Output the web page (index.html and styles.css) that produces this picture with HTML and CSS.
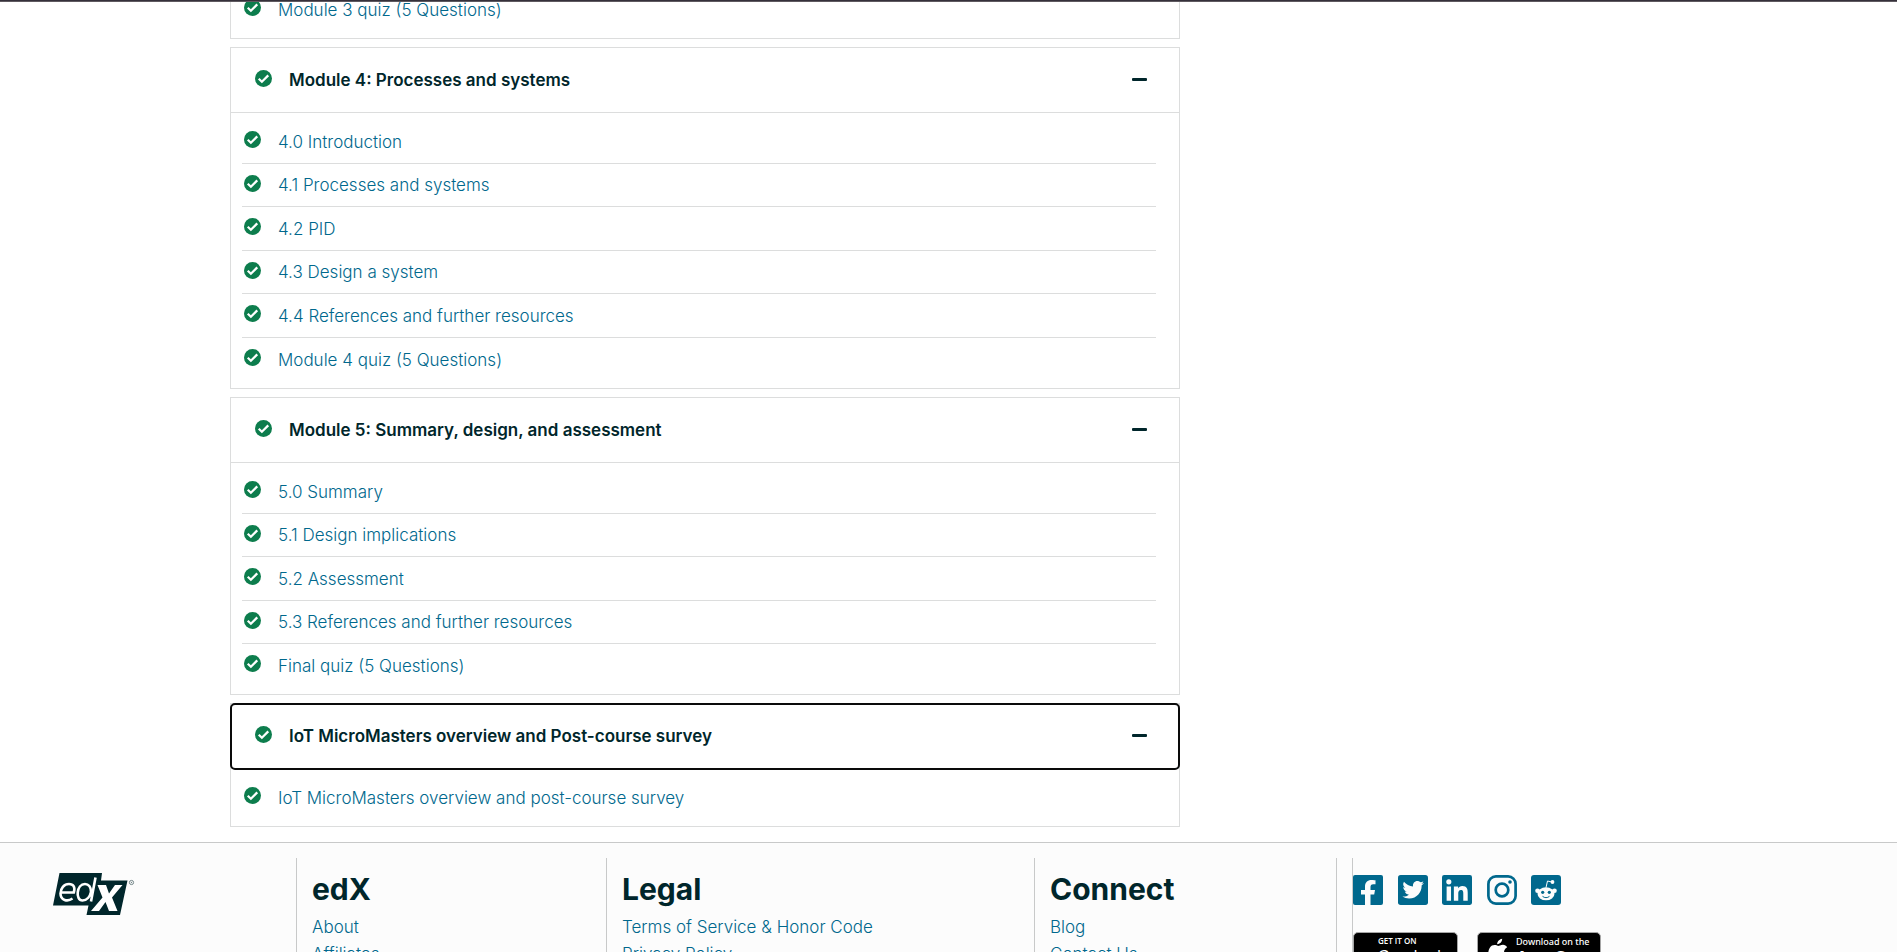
FILE: index.html
```html
<!DOCTYPE html>
<html lang="en">
<head>
<meta charset="utf-8">
<meta name="viewport" content="width=device-width, initial-scale=1">
<title>Course outline | edX</title>
<link rel="stylesheet" href="styles.css">
</head>
<body>
<svg class="sprite" aria-hidden="true">
  <symbol id="check" viewBox="0 0 20 20"><path fill="currentColor" d="M10 0a10 10 0 1 0 0 20 10 10 0 0 0 0-20z"/><path fill="none" stroke="#fff" stroke-width="2.6" d="M4.400 10.200l3.700 3.600 7.500-7.500"/></symbol>
</svg>
<div class="page">
  <div class="topbar"></div>
  <main class="course">
    <div class="outline">
      <section class="card card-continued">
        <ul class="units">
          <li><svg class="check" aria-hidden="true"><use href="#check"/></svg><a href="#m3q">Module 3 quiz (5 Questions)</a></li>
        </ul>
      </section>
      <section class="card">
        <button class="card-head" type="button" aria-expanded="true"><svg class="check" aria-hidden="true"><use href="#check"/></svg><span class="card-title">Module 4: Processes and systems</span><span class="minus"></span></button>
        <ul class="units">
          <li><svg class="check" aria-hidden="true"><use href="#check"/></svg><a href="#u40">4.0 Introduction</a></li>
          <li><svg class="check" aria-hidden="true"><use href="#check"/></svg><a href="#u41">4.1 Processes and systems</a></li>
          <li><svg class="check" aria-hidden="true"><use href="#check"/></svg><a href="#u42">4.2 PID</a></li>
          <li><svg class="check" aria-hidden="true"><use href="#check"/></svg><a href="#u43">4.3 Design a system</a></li>
          <li><svg class="check" aria-hidden="true"><use href="#check"/></svg><a href="#u44">4.4 References and further resources</a></li>
          <li><svg class="check" aria-hidden="true"><use href="#check"/></svg><a href="#m4q">Module 4 quiz (5 Questions)</a></li>
        </ul>
      </section>
      <section class="card">
        <button class="card-head" type="button" aria-expanded="true"><svg class="check" aria-hidden="true"><use href="#check"/></svg><span class="card-title">Module 5: Summary, design, and assessment</span><span class="minus"></span></button>
        <ul class="units">
          <li><svg class="check" aria-hidden="true"><use href="#check"/></svg><a href="#u50">5.0 Summary</a></li>
          <li><svg class="check" aria-hidden="true"><use href="#check"/></svg><a href="#u51">5.1 Design implications</a></li>
          <li><svg class="check" aria-hidden="true"><use href="#check"/></svg><a href="#u52">5.2 Assessment</a></li>
          <li><svg class="check" aria-hidden="true"><use href="#check"/></svg><a href="#u53">5.3 References and further resources</a></li>
          <li><svg class="check" aria-hidden="true"><use href="#check"/></svg><a href="#fq">Final quiz (5 Questions)</a></li>
        </ul>
      </section>
      <section class="card">
        <button class="card-head is-focused" type="button" aria-expanded="true"><svg class="check" aria-hidden="true"><use href="#check"/></svg><span class="card-title">IoT MicroMasters overview and Post-course survey</span><span class="minus"></span></button>
        <ul class="units">
          <li><svg class="check" aria-hidden="true"><use href="#check"/></svg><a href="#survey">IoT MicroMasters overview and post-course survey</a></li>
        </ul>
      </section>
    </div>
  </main>
  <footer class="footer">
    <div class="brand">
      <a class="logo" href="#home" aria-label="edX home">
        <svg viewBox="0 0 82 42" aria-hidden="true">
          <path fill="#00262b" d="M6.500 0H49l-1 7.500h26.500L67 42H33.500l2-9.500H0z"/>
          <g fill="none" stroke="#fff" stroke-width="2.600"><path d="M8.500 19.500h12.300c1.700-5.500-.5-8.500-4.800-8.500-5 0-8.500 4.500-8.500 9.500 0 7 7 8.500 12 5"/><path d="M38 19c0-5-2.500-8-6-8-8.500 0-10 16.500-2.500 16.500 4.500 0 7.500-4 8.500-8.500zM42.500 4.500L38 28.500"/></g>
          <path fill="#fff" d="M44.500 12H53l3 8.500L62 12h7.500L59 24.500 64.500 38H56l-3.500-9-6.500 9h-8l11.500-13.500z"/>
          <circle cx="78.500" cy="9.500" r="2.100" fill="none" stroke="#75878a"/><circle cx="78.500" cy="9.500" r=".7" fill="#75878a"/>
        </svg>
      </a>
    </div>
    <nav class="links"><h2>edX</h2><a href="#about">About</a><a href="#affiliates">Affiliates</a></nav>
    <nav class="links"><h2>Legal</h2><a href="#terms">Terms of Service &amp; Honor Code</a><a href="#privacy">Privacy Policy</a></nav>
    <nav class="links"><h2>Connect</h2><a href="#blog">Blog</a><a href="#contact">Contact Us</a></nav>
    <div class="divider"></div>
    <div class="social-area">
      <div class="social">
        <a href="#facebook" aria-label="Facebook"><svg viewBox="0 0 30 30"><rect width="30" height="30" rx="2" fill="currentColor"/><path fill="#fcfcfc" d="M12 30V19.500H8V15h4v-3.500C12 7.500 14.500 5 18.500 5c2 0 4 .3 4 .3v4h-2.200c-2.200 0-2.800 1.300-2.800 2.700v3H22l-.8 4.500h-3.700V30z"/></svg></a>
        <a href="#twitter" aria-label="Twitter"><svg viewBox="0 0 448 448"><rect width="448" height="448" rx="40" fill="currentColor"/><path fill="#fcfcfc" d="M351 159c0 3 0 6 0 8 0 87-66 187-187 187-37 0-72-11-101-29 5 1 10 1 16 1 31 0 59-10 82-28-29-1-53-20-61-46 10 2 19 2 30-1-30-6-53-33-53-65v-1c9 5 19 8 30 8a66 66 0 0 1-20-88c32 40 81 66 136 69-9-45 24-82 64-82 19 0 36 8 48 21 15-3 29-8 42-16-5 15-15 28-29 36 13-1 26-5 38-10-9 13-20 25-33 34z" transform="translate(2 -4)"/></svg></a>
        <a href="#linkedin" aria-label="LinkedIn"><svg viewBox="0 0 448 448"><rect width="448" height="448" rx="32" fill="currentColor"/><path fill="#fcfcfc" d="M69 170h66v214H69zM102 64a38 38 0 1 1 0 77 38 38 0 0 1 0-77zM384 384h-66V280c0-25-1-57-35-57s-40 27-40 55v106h-66V170h64v29h1c9-17 30-35 63-35 67 0 79 44 79 102z"/></svg></a>
        <a href="#instagram" aria-label="Instagram"><svg viewBox="0 0 30 30" fill="none" stroke="currentColor" stroke-width="2.700"><rect x="1.400" y="1.400" width="27.200" height="27.200" rx="7.500"/><circle cx="15" cy="15" r="6.300"/><circle cx="23" cy="7" r="1.800" fill="currentColor" stroke="none"/></svg></a>
        <a href="#reddit" aria-label="Reddit"><svg viewBox="0 0 30 30"><rect width="30" height="30" rx="3" fill="currentColor"/><g fill="#fcfcfc"><ellipse cx="15" cy="18.800" rx="8.500" ry="6.500"/><circle cx="6.500" cy="15.800" r="2.300"/><circle cx="23.500" cy="15.800" r="2.300"/><circle cx="21.500" cy="7" r="1.900"/></g><path d="M15 12.500l1.500-6.500 5 1.200" fill="none" stroke="#fcfcfc"/><g fill="currentColor"><circle cx="11.700" cy="17.300" r="1.600"/><circle cx="18.300" cy="17.300" r="1.600"/></g><path d="M11.500 21.300c2 1.800 5 1.800 7 0" fill="none" stroke="currentColor"/></svg></a>
      </div>
      <div class="stores">
        <a class="store google" href="#play"><svg viewBox="0 0 20 24" aria-hidden="true"><path fill="#4fc3c8" d="M0 0v24l12-12z"/><path fill="#8bc56b" d="M0 0l16 8-4 4z"/></svg><span><small>GET IT ON</small><b>Google play</b></span></a>
        <a class="store apple" href="#appstore"><svg viewBox="0 0 24 28" aria-hidden="true"><path fill="#fff" d="M17 0c0 4-3 6.500-6 6.500C11 3 14 .5 17 0zM12 8.500c1.500 0 3-1.500 6-1.500 2 0 4 1 5 3-6 3.500-4 10 1 12-2 4-4 6-6 6s-3-1-6-1-4 1-6 1C2 28-2 17 2 11c3-5 8-3.500 10-2.500z"/></svg><span><small>Download on the</small><b>App Store</b></span></a>
      </div>
    </div>
  </footer>
</div>
</body>
</html>
```
FILE: styles.css
```css
* { box-sizing: border-box; }
body {
  margin: 0;
  background: #fff;
  color: #00262b;
  font: 300 17px/24px Inter, "Liberation Sans", sans-serif;
}
a { color: #00688d; text-decoration: none; }
.sprite { display: none; }
.page { height: 100vh; overflow: hidden; }
.topbar {
  position: fixed;
  inset: 0 0 auto;
  height: 2px;
  background: #35303a;
  border-bottom: 1px solid #5f5a60;
}

.course {
  display: grid;
  grid-template-columns: 2fr 1fr;
  gap: 12px;
  max-width: 1437px;
  margin: -20px auto 15px;
}
.outline { display: grid; gap: 8px; }
.card { border: 1px solid #dcdddd; }
.card-head {
  display: flex;
  align-items: center;
  gap: 17px;
  width: 100%;
  height: 65px;
  padding: 0 32px 0 24px;
  border: 0;
  border-bottom: 1px solid #dcdddd;
  background: none;
  color: inherit;
  font: inherit;
  font-weight: 600;
  text-align: left;
}
.is-focused {
  outline: 2px solid #0a0a0a;
  outline-offset: -1px;
  border-radius: 4px;
}
.card-title { flex: 1; }
.minus { width: 15px; height: 3px; margin-bottom: 2px; border-radius: 1px; background: #00262b; }
.check { flex: none; width: 17px; height: 17px; margin-bottom: 4px; color: #0d7d4d; }

.units { list-style: none; margin: 0; padding: 7px 23px 7px 11px; }
.units li {
  display: flex;
  align-items: center;
  gap: 17px;
  height: 44px;
  padding-left: 2px;
  border-bottom: 1px solid #dcdddd;
}
.units li:nth-child(even), .units li:last-child { height: 43px; }
.units li:last-child { border-bottom: 0; }

.footer {
  display: grid;
  grid-template-columns: 296fr 310fr 428fr 302fr 16fr 545fr;
  min-height: 220px;
  padding-top: 15px;
  border-top: 1px solid #c8c9c9;
  background: #fcfcfc;
}
.brand { padding: 15px 0 0 53px; }
.logo svg { display: block; width: 82px; height: 42px; }
.links, .divider, .social-area { border-left: 1px solid #c8c9c9; }
.links { display: flex; flex-direction: column; padding: 13px 0 0 15px; }
.links h2 { margin: 0 0 6px; font-size: 30px; line-height: 37px; font-weight: 700; }
.links a { line-height: 27px; }
.social { display: flex; gap: 15px; padding-top: 17px; color: #00688d; }
.social a { color: inherit; }
.social a, .social svg { display: block; width: 30px; height: 30px; }
.social a:nth-child(even) { width: 29px; }
.stores { display: flex; gap: 19px; padding-top: 27px; }
.store {
  display: flex;
  gap: 8px;
  height: 40px;
  border: 1px solid #a6a6a6;
  border-radius: 5px;
  background: #000;
  color: #fff;
}
.store svg { flex: none; }
.store small, .store b { display: block; white-space: nowrap; }
.google { width: 105px; padding: 2px 4px; }
.google svg { width: 12px; height: 24px; margin-top: 12px; }
.google small { font: 600 8px/11px "Open Sans", sans-serif; }
.google b { font: 400 15px/18px Lato, sans-serif; }
.apple { width: 124px; padding: 3px 10px; }
.apple svg { width: 20px; height: 25px; margin-top: 2px; }
.apple small { font: 500 9px/12px "Noto Sans", sans-serif; }
.apple b { font: 600 18px/18px "Noto Sans", sans-serif; }
```
